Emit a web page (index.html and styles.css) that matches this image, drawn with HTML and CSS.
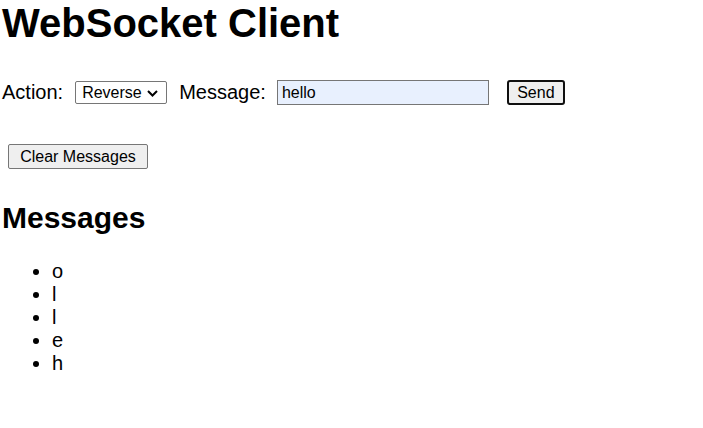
FILE: index.html
```html
<!DOCTYPE html>
<html>
<head>
<meta charset="utf-8">
<link rel="stylesheet" href="styles.css">
</head>
<body>
<h1 class="title">WebSocket Client</h1>
<div class="controls">
  <label class="label" for="action">Action:</label>
  <span class="select-wrap">
    <select id="action" class="select">
      <option>Reverse</option>
    </select>
    <svg class="chevron" width="11" height="7" viewBox="0 0 11 7" aria-hidden="true"><polyline points="1,1 5.5,5.5 10,1" fill="none" stroke="#000" stroke-width="2"/></svg>
  </span>
  <label class="label label-msg" for="msg">Message:</label>
  <input id="msg" class="input" type="text" value="hello">
  <button class="btn btn-send">Send</button>
</div>
<div class="clear-row">
  <button class="btn btn-clear">Clear Messages</button>
</div>
<h2 class="subtitle">Messages</h2>
<ul class="messages">
  <li>o</li>
  <li>l</li>
  <li>l</li>
  <li>e</li>
  <li>h</li>
</ul>
</body>
</html>
```
FILE: styles.css
```css
html, body {
  margin: 0;
  padding: 0;
  background: #fff;
}
body {
  padding: 0 2px;
  font-family: "Liberation Sans", Arial, sans-serif;
  font-size: 20px;
  color: #000;
}
.title {
  margin: 0;
  font-size: 40px;
  font-weight: bold;
  line-height: 46px;
}
.controls {
  display: flex;
  align-items: center;
  margin-top: 34px;
  height: 25px;
}
.label {
  font-size: 20px;
  line-height: 23px;
}
.select-wrap {
  position: relative;
  display: inline-flex;
  margin-left: 12px;
}
.select {
  -webkit-appearance: none;
  appearance: none;
  box-sizing: border-box;
  width: 92px;
  height: 23px;
  font-family: "Liberation Sans", Arial, sans-serif;
  font-size: 16px;
  border: 1px solid #767676;
  border-radius: 2px;
  background: #fff;
  color: #000;
  padding: 0 0 0 6px;
}
.chevron {
  position: absolute;
  right: 9px;
  top: 9px;
  pointer-events: none;
}
.label-msg {
  margin-left: 12px;
}
.input {
  margin-left: 11px;
  box-sizing: border-box;
  width: 212px;
  height: 25px;
  font-family: "Liberation Sans", Arial, sans-serif;
  font-size: 16px;
  border: 1px solid #767676;
  background: #e8f0fe;
  padding: 1px 4px;
  color: #000;
}
.btn {
  font-family: "Liberation Sans", Arial, sans-serif;
  font-size: 16px;
  background: #efefef;
  color: #000;
  border: 1px solid #767676;
  border-radius: 2px;
  box-sizing: border-box;
  height: 25px;
  padding: 0 9px;
}
.btn-send {
  margin-left: 18px;
  width: 58px;
  border: 2px solid #101010;
  border-radius: 3px;
  padding: 0;
}
.clear-row {
  margin-top: 39px;
  padding-left: 6px;
  display: flex;
}
.btn-clear {
  width: 140px;
  padding: 0;
}
.subtitle {
  margin: 31px 0 0;
  font-size: 30px;
  font-weight: bold;
  line-height: 35px;
}
.messages {
  margin: 25px 0 0;
  padding-left: 50px;
  line-height: 23px;
}
```
